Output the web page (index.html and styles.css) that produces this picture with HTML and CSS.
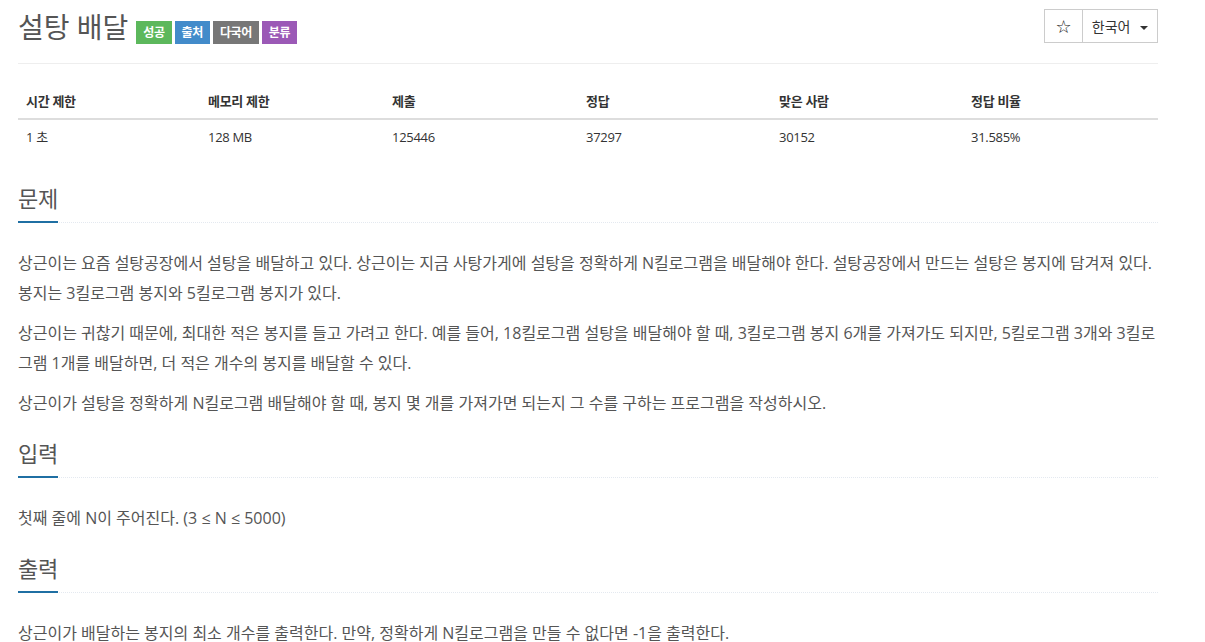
FILE: index.html
```html
<!DOCTYPE html>
<html lang="ko">
<head>
    <meta charset="UTF-8">
    <meta name="viewport" content="width=device-width, initial-scale=1.0">
    <title>설탕 배달</title>
    <link rel="stylesheet" href="styles.css">
</head>
<body>

<div class="container">
    <!-- Title -->
    <div class="page-header">
        <h1 class="problem-title">
            <span id="problem_title">설탕 배달</span>
            <span class="label label-success">성공</span>
            <span class="label label-primary">출처</span>
            <span class="label label-default">다국어</span>
            <span class="label label-purple">분류</span>
        </h1>
        <div class="btn-group">
            <button class="btn btn-star">☆</button>
            <button class="btn btn-lang">한국어 <span class="caret"></span></button>
        </div>
    </div>

    <!-- Problem info -->
    <table id="problem-info" class="table">
        <thead>
            <tr>
                <th>시간 제한</th>
                <th>메모리 제한</th>
                <th>제출</th>
                <th>정답</th>
                <th>맞은 사람</th>
                <th>정답 비율</th>
            </tr>
        </thead>
        <tbody>
            <tr>
                <td>1 초</td>
                <td>128 MB</td>
                <td>125446</td>
                <td>37297</td>
                <td>30152</td>
                <td>31.585%</td>
            </tr>
        </tbody>
    </table>

    <!-- Description -->
    <section id="description" class="problem-section">
        <div class="headline"><h2>문제</h2></div>
        <div class="problem-text">
            <p>상근이는 요즘 설탕공장에서 설탕을 배달하고 있다. 상근이는 지금 사탕가게에 설탕을 정확하게 N킬로그램을 배달해야 한다. 설탕공장에서 만드는 설탕은 봉지에 담겨져 있다. 봉지는 3킬로그램 봉지와 5킬로그램 봉지가 있다.</p>
            <p>상근이는 귀찮기 때문에, 최대한 적은 봉지를 들고 가려고 한다. 예를 들어, 18킬로그램 설탕을 배달해야 할 때, 3킬로그램 봉지 6개를 가져가도 되지만, 5킬로그램 3개와 3킬로그램 1개를 배달하면, 더 적은 개수의 봉지를 배달할 수 있다.</p>
            <p>상근이가 설탕을 정확하게 N킬로그램 배달해야 할 때, 봉지 몇 개를 가져가면 되는지 그 수를 구하는 프로그램을 작성하시오.</p>
        </div>
    </section>

    <!-- Input -->
    <section id="input" class="problem-section">
        <div class="headline"><h2>입력</h2></div>
        <div class="problem-text">
            <p>첫째 줄에 N이 주어진다. (3 ≤ N ≤ 5000)</p>
        </div>
    </section>

    <!-- Output -->
    <section id="output" class="problem-section">
        <div class="headline"><h2>출력</h2></div>
        <div class="problem-text">
            <p>상근이가 배달하는 봉지의 최소 개수를 출력한다. 만약, 정확하게 N킬로그램을 만들 수 없다면 -1을 출력한다.</p>
        </div>
    </section>
</div>

</body>
</html>
```

FILE: styles.css
```css
body {
    margin: 0;
    font-family: "Open Sans", "Noto Sans CJK KR", sans-serif;
    font-size: 14px;
    color: #333;
    background: #fff;
}
.container {
    width: 1140px;
    padding-left: 18px;
}
.page-header {
    display: flex;
    justify-content: space-between;
    align-items: flex-start;
    height: 55px;
    padding-top: 8px;
    border-bottom: 1px solid #eee;
    margin-bottom: 20px;
}
.problem-title {
    display: flex;
    align-items: flex-start;
    margin: 0;
    font-size: 28px;
    line-height: 33px;
    font-weight: 400;
    color: #555;
}
#problem_title {
    margin-top: 3px;
    margin-right: 8px;
}
.label {
    display: inline-block;
    height: 23px;
    line-height: 23px;
    margin-top: 13px;
    margin-right: 3px;
    padding: 0 7px;
    font-size: 12px;
    font-weight: bold;
    color: #fff;
    letter-spacing: -0.4px;
}
.label-success { background: #5cb85c; }
.label-primary { background: #428bca; }
.label-default { background: #777; }
.label-purple { background: #9b59b6; }
.btn-group {
    display: flex;
    margin-top: 1px;
}
.btn {
    height: 34px;
    padding: 0;
    border: 1px solid #ccc;
    background: #fff;
    color: #333;
    font-family: "Open Sans", "Noto Sans CJK KR", sans-serif;
    font-size: 14px;
    cursor: pointer;
}
.btn-star {
    width: 39px;
    font-family: "DejaVu Sans", sans-serif;
    font-size: 18px;
    color: #111;
}
.btn-lang {
    width: 76px;
    margin-left: -1px;
}
.caret {
    display: inline-block;
    width: 0;
    height: 0;
    margin-left: 6px;
    vertical-align: middle;
    border-top: 4px solid #333;
    border-left: 4px solid transparent;
    border-right: 4px solid transparent;
}
.table {
    width: 100%;
    table-layout: fixed;
    border-collapse: collapse;
    margin-bottom: 26px;
}
.table th,
.table td {
    padding: 8px;
    text-align: left;
    line-height: 18px;
    font-size: 13px;
    letter-spacing: -0.3px;
}
.table th {
    font-weight: bold;
    border-bottom: 2px solid #ddd;
}
.table th:nth-child(1) { width: 166px; }
.table th:nth-child(2) { width: 168px; }
.table th:nth-child(3) { width: 178px; }
.table th:nth-child(4) { width: 177px; }
.table th:nth-child(5) { width: 176px; }
.headline {
    margin: 17px 0 25px;
    border-bottom: 1px dotted #e4e9f0;
}
.headline h2 {
    display: inline-block;
    margin: 0 0 -1px;
    padding-bottom: 5px;
    font-size: 22px;
    line-height: 36px;
    font-weight: 400;
    color: #555;
    letter-spacing: -0.3px;
    border-bottom: 2px solid #1f6fa3;
}
.problem-text p {
    margin: 0 0 10px;
    font-size: 16px;
    line-height: 30px;
    color: #555;
    letter-spacing: 0;
}
```
